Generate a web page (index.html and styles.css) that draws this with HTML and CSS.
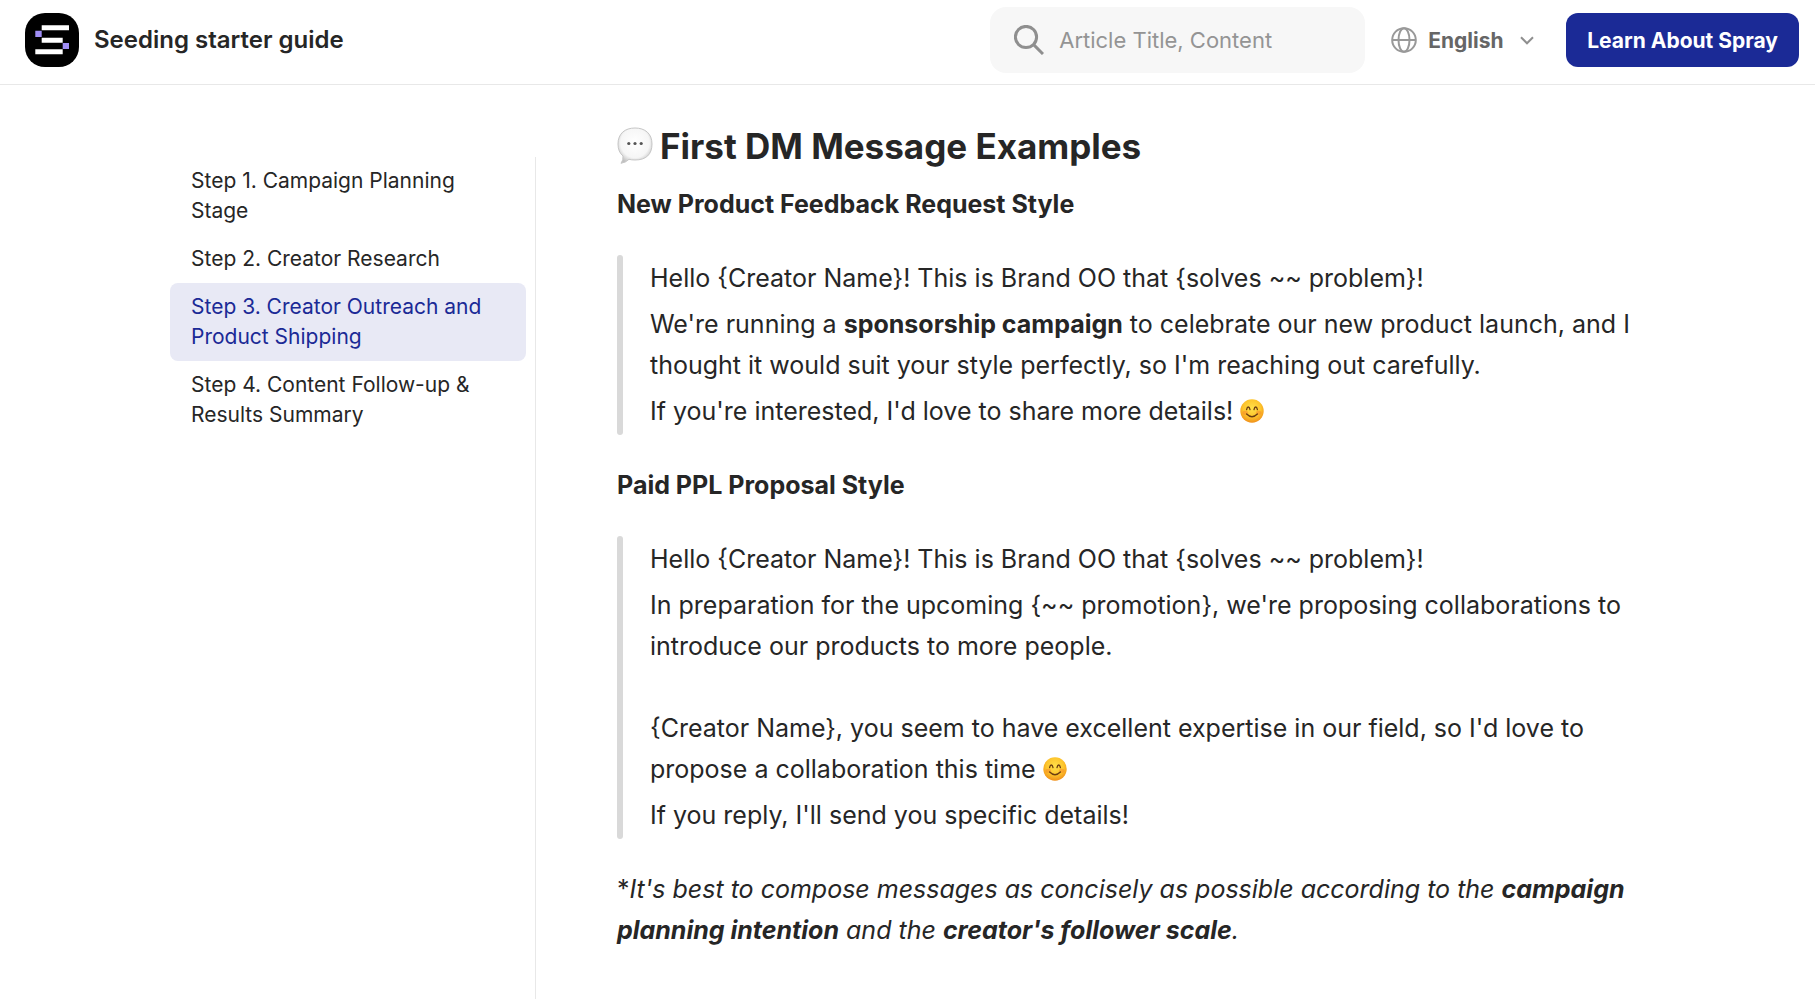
FILE: index.html
```html
<!DOCTYPE html>
<html lang="en">
<head>
    <meta charset="UTF-8">
    <meta name="viewport" content="width=device-width, initial-scale=1.0">
    <title>Seeding starter guide</title>
    <link rel="stylesheet" href="styles.css">
</head>
<body>
    <svg class="defs" width="0" height="0" aria-hidden="true">
        <defs>
            <radialGradient id="face" cx="50%" cy="38%" r="62%">
                <stop offset="0" stop-color="#ffe04a"/>
                <stop offset="0.6" stop-color="#fdc52c"/>
                <stop offset="1" stop-color="#f0901a"/>
            </radialGradient>
            <radialGradient id="bubble" cx="50%" cy="42%" r="60%">
                <stop offset="0" stop-color="#ffffff"/>
                <stop offset="0.7" stop-color="#f6f6f6"/>
                <stop offset="1" stop-color="#c0c0c0"/>
            </radialGradient>
            <symbol id="smile" viewBox="0 0 24 24">
                <circle cx="12" cy="12" r="11.7" fill="url(#face)"/>
                <ellipse cx="5.3" cy="13.8" rx="2.8" ry="2" fill="#f5792a" opacity="0.4"/>
                <ellipse cx="18.7" cy="13.8" rx="2.8" ry="2" fill="#f5792a" opacity="0.4"/>
                <path d="M6.600 10.600q.5-2.600 1.700-2.600t1.700 2.600M14 10.600q.5-2.600 1.700-2.600t1.700 2.600M6.600 15q5.400 5.400 10.800 0" fill="none" stroke="#6b3d10" stroke-width="1.3" stroke-linecap="round"/>
            </symbol>
        </defs>
    </svg>

    <header class="header">
        <a class="brand" href="#">
            <svg class="logo" viewBox="0 0 54 54" aria-hidden="true">
                <rect width="54" height="54" rx="20"/>
                <path d="M16.700 12.300H44v5H16.700zM16.700 24.700h21v5h-21zM10.300 36.300h27.400v5H10.300z" fill="#fff"/>
                <path d="M10.300 17.700h6.400V24h-6.400zM37.700 29.900H44v6.200h-6.300z" fill="#a08ef5"/>
            </svg>
            <span>Seeding starter guide</span>
        </a>
        <div class="tools">
            <label class="search">
                <svg class="search-icon" viewBox="0 0 30 30" aria-hidden="true">
                    <circle cx="12" cy="12" r="10.600"/>
                    <path d="M19.600 19.600L29 29"/>
                </svg>
                <input type="search" placeholder="Article Title, Content" aria-label="Search articles">
            </label>
            <label class="language">
                <svg class="globe" viewBox="0 0 26 26" aria-hidden="true">
                    <circle cx="13" cy="13" r="11.800"/>
                    <ellipse cx="13" cy="13" rx="5.500" ry="11.800"/>
                    <path d="M1.200 13h23.600"/>
                </svg>
                <select aria-label="Language">
                    <option>English</option>
                </select>
                <svg class="chevron" viewBox="0 0 14 9" aria-hidden="true">
                    <path d="M1 1.200L7 7.300L13 1.200"/>
                </svg>
            </label>
            <button class="cta" type="button">Learn About Spray</button>
        </div>
    </header>

    <div class="container">
        <nav class="sidebar">
            <a class="step" href="#">Step 1. Campaign Planning Stage</a>
            <a class="step" href="#">Step 2. Creator Research</a>
            <a class="step active" href="#">Step 3. Creator Outreach and Product Shipping</a>
            <a class="step" href="#">Step 4. Content Follow-up &amp; Results Summary</a>
        </nav>

        <main class="article">
            <h1>
                <svg class="bubble" viewBox="0 0 36 38" role="img" aria-label="Speech balloon">
                    <path d="M18 1C28 1 35 6.500 35 17S29 33 18 33Q14.500 33 12 32.300Q9 35.500 4 36.300Q6.500 33 6 29Q1 25 1 17C1 6.500 8 1 18 1Z" fill="url(#bubble)" stroke="#c6c6c6"/>
                    <g fill="#555"><circle cx="11.800" cy="16.500" r="1.600"/><circle cx="18" cy="16.500" r="1.600"/><circle cx="24.200" cy="16.500" r="1.600"/></g>
                </svg>
                First DM Message Examples
            </h1>

            <h2>New Product Feedback Request Style</h2>
            <blockquote>
                <p>Hello {Creator Name}! This is Brand OO that {solves ~~ problem}!</p>
                <p>We're running a <strong>sponsorship campaign</strong> to celebrate our new product launch, and I thought it would suit your style perfectly, so I'm reaching out carefully.</p>
                <p>If you're interested, I'd love to share more details! <svg class="emoji" role="img" aria-label="Smiling face"><use href="#smile"/></svg></p>
            </blockquote>

            <h2>Paid PPL Proposal Style</h2>
            <blockquote>
                <p>Hello {Creator Name}! This is Brand OO that {solves ~~ problem}!</p>
                <p>In preparation for the upcoming {~~ promotion}, we're proposing collaborations to introduce our products to more people.<br><br>{Creator Name}, you seem to have excellent expertise in our field, so I'd love to propose a collaboration this time <svg class="emoji" role="img" aria-label="Smiling face"><use href="#smile"/></svg></p>
                <p>If you reply, I'll send you specific details!</p>
            </blockquote>

            <p class="note">*<em>It's best to compose messages as concisely as possible according to the <strong>campaign planning intention</strong> and the <strong>creator's follower scale</strong>.</em></p>
        </main>
    </div>
</body>
</html>
```
FILE: styles.css
```css
* {
    box-sizing: border-box;
}

body {
    margin: 0;
    min-height: 100vh;
    display: flex;
    flex-direction: column;
    font-family: Inter, sans-serif;
    color: #262626;
    background-color: #fff;
}

a {
    color: inherit;
    text-decoration: none;
}

strong {
    font-weight: 700;
}

.defs {
    position: absolute;
}

/* Header */
.header {
    display: flex;
    align-items: center;
    justify-content: space-between;
    padding: 7px 16px 11px 25px;
    border-bottom: 1px solid #e8e8e8;
}

.brand {
    display: flex;
    align-items: center;
    gap: 15px;
    font-size: 24px;
    font-weight: 600;
    line-height: 28px;
}

.logo {
    width: 54px;
    height: 54px;
}

.tools {
    display: flex;
    align-items: center;
}

.search {
    display: flex;
    align-items: center;
    gap: 15px;
    width: 375px;
    height: 66px;
    padding: 0 24px;
    border-radius: 16px;
    background-color: #f7f7f7;
}

.search-icon {
    flex: none;
    width: 30px;
    height: 30px;
    fill: none;
    stroke: #8f8f8f;
    stroke-width: 3;
}

.search input {
    flex: 1;
    min-width: 0;
    padding: 0;
    border: none;
    outline: none;
    background: none;
    font: inherit;
    font-size: 22px;
}

.search input::placeholder {
    color: #949494;
}

.language {
    display: flex;
    align-items: center;
    margin: 0 32px 0 26px;
    cursor: pointer;
}

.globe {
    width: 26px;
    height: 26px;
    margin-right: 11px;
    fill: none;
    stroke: #999;
    stroke-width: 2;
}

.language select {
    appearance: none;
    margin-right: 16px;
    padding: 0;
    border: none;
    background: none;
    font: inherit;
    font-size: 21px;
    font-weight: 700;
    color: #666;
}

.chevron {
    width: 14px;
    height: 9px;
    fill: none;
    stroke: #8f8f8f;
    stroke-width: 2;
}

.cta {
    height: 54px;
    padding: 0 21px;
    border: none;
    border-radius: 12px;
    background-color: #1b2a96;
    font: inherit;
    font-size: 21px;
    font-weight: 700;
    color: #fff;
    cursor: pointer;
}

/* Page body */
.container {
    flex: 1;
    display: flex;
    width: 100%;
    max-width: 1475px;
    margin: 0 auto;
}

.sidebar {
    flex: none;
    width: 366px;
    margin-top: 72px;
    padding-right: 9px;
    border-right: 1px solid #e8e8e8;
}

.step {
    display: block;
    padding: 9px 21px;
    border-radius: 8px;
    font-size: 21px;
    line-height: 30px;
}

.step.active {
    background-color: #e8e9f5;
    color: #1b2a96;
}

.article {
    flex: 1;
    min-width: 0;
    padding: 38px 0 48px 81px;
    font-size: 25px;
    line-height: 41px;
}

.article h1 {
    display: flex;
    align-items: center;
    gap: 7px;
    margin: 0 0 15px;
    font-size: 35px;
    font-weight: 700;
    line-height: 46px;
}

.bubble {
    width: 36px;
    height: 38px;
}

.article h2 {
    margin: 0;
    font-size: 25px;
    font-weight: 700;
    line-height: 41px;
}

.article p {
    margin: 0;
}

.article blockquote {
    position: relative;
    display: flex;
    flex-direction: column;
    gap: 5px;
    margin: 30px 0;
    padding: 3px 0 3px 33px;
}

/* Rounded bar along the quote */
.article blockquote::before {
    content: "";
    position: absolute;
    top: 0;
    bottom: 0;
    left: 0;
    width: 6px;
    border-radius: 3px;
    background-color: #d9d9d9;
}

.emoji {
    width: 24px;
    height: 24px;
    vertical-align: -3px;
}
```
